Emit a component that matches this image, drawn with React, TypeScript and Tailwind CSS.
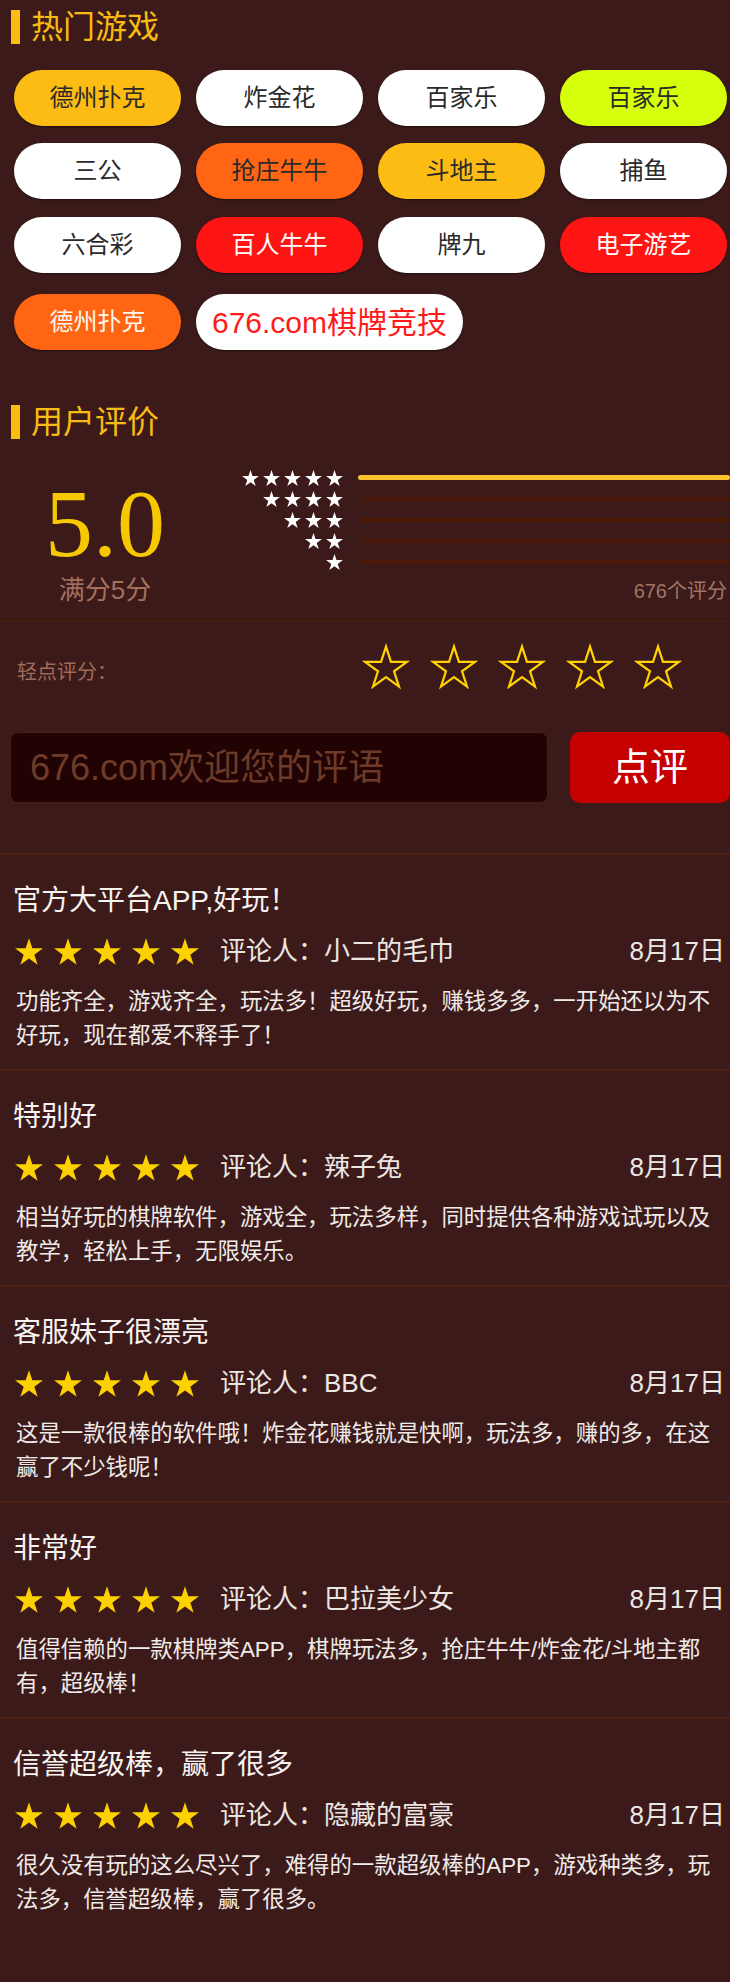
import React from "react";

const STAR_PTS =
  "47.55,0 58.78,34.55 95.1,34.55 65.72,55.9 76.94,90.45 47.55,69.1 18.16,90.45 29.38,55.9 0,34.55 36.32,34.55";

function Star({ w, h, color }: { w: number; h: number; color: string }) {
  return (
    <svg width={w} height={h} viewBox="0 0 95.1 90.45" className="block shrink-0">
      <polygon points={STAR_PTS} fill={color} />
    </svg>
  );
}

function OutlineStar() {
  return (
    <svg width={48} height={46} viewBox="-6 -8 107.1 104" className="block shrink-0">
      <polygon points={STAR_PTS} fill="none" stroke="#ffd200" strokeWidth={5} strokeLinejoin="miter" />
    </svg>
  );
}

function SectionTitle({ text }: { text: string }) {
  return (
    <div className="flex items-center h-[34px] pl-[11px]">
      <div className="w-[9px] h-[34px] bg-[#fbbd10]" />
      <div className="ml-[11px] text-[32px] leading-[34px] text-[#f8bb12]">{text}</div>
    </div>
  );
}

type Btn = { t: string; bg: string; fg: string; wide?: boolean };

const rows: Btn[][] = [
  [
    { t: "德州扑克", bg: "bg-[#fdbc13]", fg: "text-[#2a2a2a]" },
    { t: "炸金花", bg: "bg-white", fg: "text-[#2a2a2a]" },
    { t: "百家乐", bg: "bg-white", fg: "text-[#2a2a2a]" },
    { t: "百家乐", bg: "bg-[#d6ff0c]", fg: "text-[#2a2a2a]" },
  ],
  [
    { t: "三公", bg: "bg-white", fg: "text-[#2a2a2a]" },
    { t: "抢庄牛牛", bg: "bg-[#ff6512]", fg: "text-[#2a2a2a]" },
    { t: "斗地主", bg: "bg-[#fdbc13]", fg: "text-[#2a2a2a]" },
    { t: "捕鱼", bg: "bg-white", fg: "text-[#2a2a2a]" },
  ],
  [
    { t: "六合彩", bg: "bg-white", fg: "text-[#2a2a2a]" },
    { t: "百人牛牛", bg: "bg-[#ff1414]", fg: "text-white" },
    { t: "牌九", bg: "bg-white", fg: "text-[#2a2a2a]" },
    { t: "电子游艺", bg: "bg-[#ff1414]", fg: "text-white" },
  ],
];

const reviews = [
  {
    title: "官方大平台APP,好玩！",
    name: "小二的毛巾",
    lines: ["功能齐全，游戏齐全，玩法多！超级好玩，赚钱多多，一开始还以为不", "好玩，现在都爱不释手了！"],
  },
  {
    title: "特别好",
    name: "辣子兔",
    lines: ["相当好玩的棋牌软件，游戏全，玩法多样，同时提供各种游戏试玩以及", "教学，轻松上手，无限娱乐。"],
  },
  {
    title: "客服妹子很漂亮",
    name: "BBC",
    lines: ["这是一款很棒的软件哦！炸金花赚钱就是快啊，玩法多，赚的多，在这", "赢了不少钱呢！"],
  },
  {
    title: "非常好",
    name: "巴拉美少女",
    lines: ["值得信赖的一款棋牌类APP，棋牌玩法多，抢庄牛牛/炸金花/斗地主都", "有，超级棒！"],
  },
  {
    title: "信誉超级棒，赢了很多",
    name: "隐藏的富豪",
    lines: ["很久没有玩的这么尽兴了，难得的一款超级棒的APP，游戏种类多，玩", "法多，信誉超级棒，赢了很多。"],
  },
];

export default function App() {
  return (
    <div className="w-[730px] min-h-[1982px] bg-[#3c1a1a] overflow-hidden font-['Liberation_Sans','Noto_Sans_CJK_SC',sans-serif]">
      <div className="pt-[10px]">
        <SectionTitle text="热门游戏" />
      </div>

      <div className="mt-[26px] pl-[14px] flex flex-col">
        {rows.map((row, ri) => (
          <div key={ri} className={`flex gap-[15px] ${ri === 1 ? "mt-[17px]" : ri === 2 ? "mt-[18px]" : ""}`}>
            {row.map((b, bi) => (
              <div
                key={bi}
                className={`w-[167px] h-[56px] rounded-full flex items-center justify-center text-[24px] shadow-[0_1px_2px_rgba(0,0,0,0.45)] ${b.bg} ${b.fg}`}
              >
                {b.t}
              </div>
            ))}
          </div>
        ))}
        <div className="flex gap-[15px] mt-[21px]">
          <div className="w-[167px] h-[56px] rounded-full flex items-center justify-center text-[24px] shadow-[0_1px_2px_rgba(0,0,0,0.45)] bg-[#ff6512] text-[#fff8f0]">
            德州扑克
          </div>
          <div className="w-[267px] h-[56px] rounded-full flex items-center justify-center text-[30px] shadow-[0_1px_2px_rgba(0,0,0,0.45)] bg-white text-[#ff1a1a]">
            676.com棋牌竞技
          </div>
        </div>
      </div>

      <div className="mt-[55px]">
        <SectionTitle text="用户评价" />
      </div>

      <div className="mt-[28px] flex">
        <div className="w-[210px] pt-[9px] flex flex-col items-center">
          <div className="text-[96px] leading-[96px] text-[#f7c800] font-['Liberation_Serif',serif]">5.0</div>
          <div className="mt-[3px] text-[26px] leading-[30px] text-[#a4705e]">满分5分</div>
        </div>
        <div className="flex-1 flex flex-col">
          {[5, 4, 3, 2, 1].map((n, i) => (
            <div key={n} className="h-[21px] flex items-center">
              <div className="w-[133px] flex justify-end gap-[4px]">
                {Array.from({ length: n }).map((_, k) => (
                  <Star key={k} w={17} h={16} color="#ffffff" />
                ))}
              </div>
              {i === 0 ? (
                <div className="ml-[15px] flex-1 h-[5px] rounded-full bg-[#fbc12e]" />
              ) : (
                <div className="ml-[19px] flex-1 h-[4px] bg-[#4e1806]" />
              )}
            </div>
          ))}
          <div className="mt-[7px] pr-[3px] text-right text-[20px] leading-[24px] text-[#a27566]">676个评分</div>
        </div>
      </div>

      <div className="mt-[15px] h-[2px] bg-[#4a1c10]" />

      <div className="mt-[21px] flex h-[46px]">
        <div className="w-[362px] pl-[17px] mt-[17px] text-[20px] leading-[24px] text-[#a06b58]">轻点评分：</div>
        <div className="flex gap-[20px]">
          {[0, 1, 2, 3, 4].map((k) => (
            <OutlineStar key={k} />
          ))}
        </div>
      </div>

      <div className="mt-[43px] flex pl-[10px] gap-[22px]">
        <input
          readOnly
          placeholder="676.com欢迎您的评语"
          className="w-[538px] h-[71px] rounded-[8px] bg-[#210303] border border-[#4a1c12] pl-[19px] text-[36px] text-[#6e3b28] placeholder:text-[#6e3b28] outline-none font-['Liberation_Sans','Noto_Sans_CJK_SC',sans-serif]"
        />
        <div className="w-[160px] h-[71px] rounded-[10px] bg-[#c50000] flex items-center justify-center text-[38px] text-white">
          点评
        </div>
      </div>

      <div className="mt-[50px]">
        {reviews.map((r, i) => (
          <div key={i} className="border-t-2 border-[#4f1f10] pt-[29px] pb-[16px]">
            <div className="pl-[13px] text-[28px] leading-[34px] text-[#f7f3f0]">{r.title}</div>
            <div className="mt-[13px] h-[40px] flex items-center pl-[15px] pr-[5px]">
              <div className="flex gap-[11px]">
                {[0, 1, 2, 3, 4].map((k) => (
                  <Star key={k} w={28} h={27} color="#fdd000" />
                ))}
              </div>
              <span className="ml-[21px] text-[26px] text-[#ece6e2]">评论人：{r.name}</span>
              <span className="ml-auto text-[26px] text-[#ece6e2]">8月17日</span>
            </div>
            <div className="mt-[14px] pl-[16px] text-[22.4px] leading-[34px] text-[#f0ebe8]">
              {r.lines.map((l, k) => (
                <div key={k} className="whitespace-nowrap">
                  {l}
                </div>
              ))}
            </div>
          </div>
        ))}
      </div>
    </div>
  );
}
